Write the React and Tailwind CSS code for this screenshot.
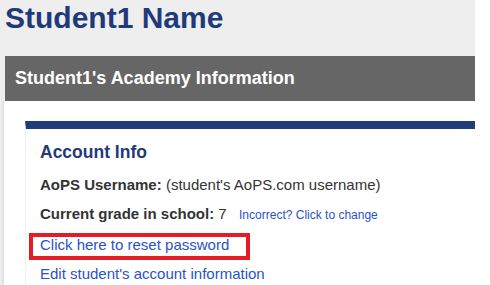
export default function App() {
  return (
    <div className="w-[475px] bg-[#eeeeee] font-['Liberation_Sans',Arial,sans-serif] overflow-hidden h-[285px]">
      <h1 className="h-[56px] pl-[5px] pt-[1px] text-[30px] leading-[34px] font-bold text-[#1f3a7a]">
        Student1 Name
      </h1>
      <div className="ml-[5px] h-[45px] bg-[#666666] flex items-center pl-[10px]">
        <span className="text-[18px] leading-[21px] font-bold text-white">
          Student1's Academy Information
        </span>
      </div>
      <div className="ml-[2px] border-l-2 border-[#e2e2e2] bg-white pl-[21px] pt-[20px] h-[200px]">
        <div className="border-t-8 border-l border-t-[#203c7b] border-l-[#f0f0f0] bg-white pl-[14px] pt-[13px] h-[200px]">
          <h2 className="text-[17.5px] leading-[20px] font-bold text-[#1f3a7a] mb-[8px]">
            Account Info
          </h2>
          <div className="text-[15px] leading-[29px] text-[#333333]">
            <span className="font-bold">AoPS Username:</span> (student's AoPS.com username)
          </div>
          <div className="text-[15px] leading-[29px] text-[#333333]">
            <span className="font-bold">Current grade in school:</span> 7
            <a className="ml-[9px] text-[12px] text-[#2a52c9] cursor-pointer"> Incorrect? Click to change</a>
          </div>
          <div className="relative text-[15px] leading-[29px]">
            <a className="text-[#2a52c9] cursor-pointer">Click here to reset password</a>
            <span className="absolute left-[-11px] top-[3px] w-[221px] h-[27px] border-4 border-[#e51c23] pointer-events-none"></span>
          </div>
          <div className="text-[15px] leading-[29px]">
            <a className="text-[#2a52c9] cursor-pointer">Edit student's account information</a>
          </div>
        </div>
      </div>
    </div>
  );
}
